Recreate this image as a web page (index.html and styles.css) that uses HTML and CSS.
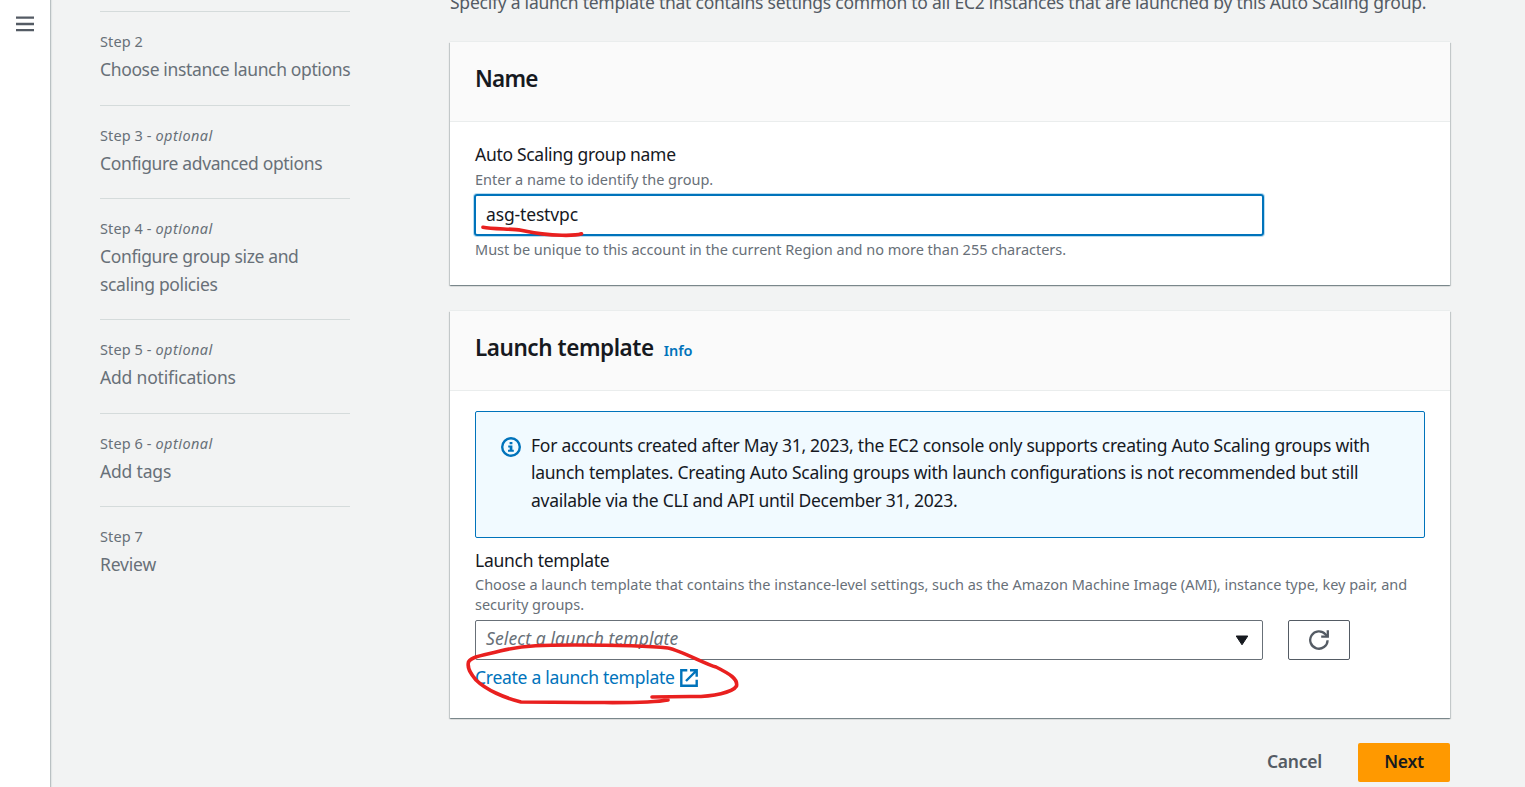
FILE: index.html
```html
<!DOCTYPE html>
<html lang="en">
<head>
<meta charset="utf-8">
<title>Create Auto Scaling group</title>
<link rel="stylesheet" href="styles.css">
</head>
<body>
<div class="page">
  <aside class="rail">
    <svg class="menu-icon" width="18" height="17" viewBox="0 0 18 17"><path d="M0 1.7h18M0 8h18M0 14.2h18" stroke="#545b64" stroke-width="2.3" fill="none"/></svg>
  </aside>
  <nav class="steps">
    <div class="step"><div class="step-label">Step 2</div><div class="step-title">Choose instance launch options</div></div>
    <div class="step"><div class="step-label">Step 3 - <i>optional</i></div><div class="step-title">Configure advanced options</div></div>
    <div class="step"><div class="step-label">Step 4 - <i>optional</i></div><div class="step-title">Configure group size and<br>scaling policies</div></div>
    <div class="step"><div class="step-label">Step 5 - <i>optional</i></div><div class="step-title loose">Add notifications</div></div>
    <div class="step"><div class="step-label">Step 6 - <i>optional</i></div><div class="step-title loose">Add tags</div></div>
    <div class="step"><div class="step-label">Step 7</div><div class="step-title loose">Review</div></div>
  </nav>
  <main class="content">
    <p class="description">Specify a launch template that contains settings common to all EC2 instances that are launched by this Auto Scaling group.</p>
    <section class="card name-card">
      <header class="card-header"><h2>Name</h2></header>
      <div class="card-body">
        <div class="label">Auto Scaling group name</div>
        <div class="hint">Enter a name to identify the group.</div>
        <div class="input"><span>asg-testvpc</span></div>
        <div class="hint constraint">Must be unique to this account in the current Region and no more than 255 characters.</div>
      </div>
    </section>
    <section class="card template-card">
      <header class="card-header"><h2>Launch template</h2><a class="info">Info</a></header>
      <div class="card-body">
        <div class="alert">
          <svg class="alert-icon" width="20" height="20" viewBox="0 0 20 20"><circle cx="10" cy="10" r="8.8" fill="none" stroke="#0073bb" stroke-width="2.4"/><path d="M8.6 5h2.8v2.2H8.6zM7.2 8.6h4.2v4.2h1.4v2H7v-2h1.7v-2.3H7.2z" fill="#0073bb"/></svg>
          <div class="alert-text">For accounts created after May 31, 2023, the EC2 console only supports creating Auto Scaling groups with<br>launch templates. Creating Auto Scaling groups with launch configurations is not recommended but still<br>available via the CLI and API until December 31, 2023.</div>
        </div>
        <div class="label">Launch template</div>
        <div class="hint">Choose a launch template that contains the instance-level settings, such as the Amazon Machine Image (AMI), instance type, key pair, and<br>security groups.</div>
        <div class="select-row">
          <div class="select"><i>Select a launch template</i><svg width="14" height="11" viewBox="0 0 14 11"><path d="M1.2 1h11.6L7 9.8z" fill="#16191f" stroke="#16191f" stroke-linejoin="round"/></svg></div>
          <div class="refresh"><svg width="22" height="22" viewBox="0 0 22 22" fill="none" stroke="#545b64" stroke-width="2.3"><path d="M19.6 11.2a8.7 8.7 0 1 1-2.2-6l2 2.2"/><path d="M19.8 1.2v6.4h-6.6"/></svg></div>
        </div>
        <a class="link"><span>Create a launch template</span><svg width="18" height="18" viewBox="0 0 18 18" fill="none" stroke="#0073bb" stroke-width="2.4"><path d="M7.3 1.3H1.3v15.4h15.4v-6"/><path d="M10 1.3h6.7v6.4M16.5 1.5L6 12"/></svg></a>
      </div>
    </section>
    <div class="actions"><a class="cancel">Cancel</a><a class="next">Next</a></div>
  </main>
  <svg class="marks" width="1525" height="787" viewBox="0 0 1525 787" fill="none" stroke="#e9201f" stroke-width="3.6" stroke-linecap="round" stroke-linejoin="round">
    <path d="M483 227.200C492 229 511 228.800 521 230.200C534 233 548 235 562 235.300C571 235.500 578 235 581.500 233.800"/>
    <path d="M668 700C650 703.500 620 702.500 585 702.500L521 702C505 698 486 690 476 680C470 673 467 668 468.500 662C472 656 485 655 500 651C525 645 545 645 575 645C615 645 650 646 668 648C682 651 705 664 716 667C730 674 738 679 736.500 686C733 692 714 697 690 696.500L652 697"/>
  </svg>
</div>
</body>
</html>
```

FILE: styles.css
```css
* { box-sizing: border-box; }
body {
  margin: 0;
  overflow: hidden;
  background: #f2f3f3;
  color: #16191f;
  font-family: "Noto Sans", "Open Sans", sans-serif;
  font-size: 17.5px;
  letter-spacing: -0.25px;
  line-height: 27.5px;
  white-space: nowrap;
}
.page { position: relative; display: flex; height: 787px; overflow: hidden; }
.rail { width: 51px; flex: none; background: #fff; border-right: 1px solid #bac1c3; padding: 16px 0 0 16px; box-shadow: 1px 0 1px #e3e6e6; }
.menu-icon { display: block; }
.steps { width: 250px; flex: none; margin-left: 49px; padding-top: 11.3px; color: #687078; }
.step { border-top: 1px solid #d5dbdb; padding: 19px 0 21px; }
.step-label { font-size: 14.5px; line-height: 20px; margin-bottom: 5px; letter-spacing: 0.1px; }
.step-label i { letter-spacing: 0.45px; }
.step-title { letter-spacing: -0.36px; }
.step-title.loose { letter-spacing: -0.18px; }
.content { width: 1000px; flex: none; margin-left: 100px; }
.description { margin: -12px 0 26px; line-height: 28px; color: #545b64; letter-spacing: -0.24px; }
.card { background: #fff; box-shadow: 0 1px 1px 0 rgba(0,28,36,.3), 1px 1px 1px 0 rgba(0,28,36,.15), -1px 1px 1px 0 rgba(0,28,36,.15), 0 -1px 0 #eaeded; }
.name-card { height: 243px; margin-bottom: 26px; }
.template-card { height: 407px; }
.card-header { display: flex; align-items: baseline; height: 80px; padding: 21px 25px 0; background: #fafafa; border-bottom: 1px solid #eaeded; }
h2 { margin: 0; font-size: 22.5px; line-height: 32px; font-weight: 600; letter-spacing: -0.45px; }
.name-card h2 { letter-spacing: -0.8px; }
.info { margin-left: 10px; font-size: 14.5px; font-weight: 600; color: #0073bb; letter-spacing: -0.1px; }
.card-body { padding: 19px 25px 0; }
.label { line-height: 28px; }
.name-card .label { line-height: 26px; padding-bottom: 2px; letter-spacing: -0.3px; }
.hint { font-size: 14.5px; line-height: 20px; color: #687078; letter-spacing: -0.015px; }
.input { width: 790px; height: 42px; margin: 5px 0 0 -1px; padding: 5px 10px; border: 2px solid #0073bb; border-radius: 3px; box-shadow: 0 0 0 1px #b9dcf0; line-height: 27px; letter-spacing: -0.15px; }
.name-card .constraint { padding-top: 3px; }
.alert { display: flex; height: 127px; margin: 1px 0 8px; padding: 19.5px 25px; background: #f1faff; border: 1px solid #0073bb; border-radius: 2px; }
.alert-icon { flex: none; margin: 5px 10px 0 0; }
.alert-text { letter-spacing: -0.26px; }
.alert + .label { padding-top: 1px; line-height: 27px; }
.select-row { display: flex; gap: 25px; margin-top: 6px; }
.select { display: flex; justify-content: space-between; align-items: center; width: 788px; height: 40px; padding: 0 13px 3px 10px; border: 1px solid #687078; border-radius: 2px; color: #687078; letter-spacing: 0.1px; }
.select svg { margin-top: 3px; }
.refresh { display: flex; align-items: center; justify-content: center; width: 62px; height: 40px; border: 1px solid #545b64; border-radius: 2px; }
.link { display: flex; align-items: center; gap: 5px; margin-top: 4px; color: #0073bb; letter-spacing: -0.28px; }
.actions { display: flex; justify-content: flex-end; align-items: flex-start; margin-top: 25px; font-weight: 600; gap: 36px; line-height: 36px; }
.cancel { color: #545b64; }
.next { display: block; width: 92px; height: 39px; text-align: center; background: #f90; border-radius: 2px; }
.marks { position: absolute; left: 0; top: 0; pointer-events: none; }
```
